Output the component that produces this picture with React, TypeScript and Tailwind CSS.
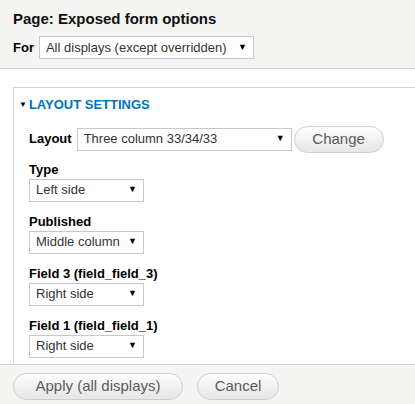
import React from 'react';

const FakeSelect: React.FC<{ value: string; width: string }> = ({ value, width }) => (
  <div
    className={`flex h-[23px] items-center justify-between border border-[#c8c8c8] bg-white pl-[6px] pr-[6px] text-[13px] text-[#333] ${width}`}
  >
    <span className="whitespace-nowrap">{value}</span>
    <span className="text-[9px] text-black">▼</span>
  </div>
);

const PillButton: React.FC<{ label: string; width: string }> = ({ label, width }) => (
  <button
    className={`flex h-[27px] items-center justify-center rounded-full border border-[#cfcfcf] bg-gradient-to-b from-[#fdfdfd] to-[#e6e6e6] text-[15px] text-[#5b5b5b] ${width}`}
  >
    {label}
  </button>
);

const fields = [
  { label: 'Type', value: 'Left side' },
  { label: 'Published', value: 'Middle column' },
  { label: 'Field 3 (field_field_3)', value: 'Right side' },
  { label: 'Field 1 (field_field_1)', value: 'Right side' },
];

export default function App() {
  return (
    <div
      className="h-[404px] w-[415px] overflow-hidden bg-white text-black"
      style={{ fontFamily: '"Liberation Sans", Arial, sans-serif' }}
    >
      <div className="h-[69px] border-b border-[#cdcdcd] bg-[#f4f4f2] px-[13px] pt-[9px]">
        <h1 className="text-[15px] font-bold leading-[20px] text-[#111]">Page: Exposed form options</h1>
        <div className="mt-[7px] flex items-center gap-[5px]">
          <span className="text-[13px] font-bold">For</span>
          <FakeSelect value="All displays (except overridden)" width="w-[215px]" />
        </div>
      </div>

      <div className="h-[295px] overflow-hidden pl-[13px] pt-[18px]">
        <div className="border-l border-t border-[#d4d4d4] pl-[5px] pt-[7px]">
          <div className="flex items-center gap-[2px] text-[13px] font-bold uppercase text-[#0074bd]">
            <span className="text-[8px] text-black">▼</span>
            <span>Layout settings</span>
          </div>

          <div className="mt-[11px] flex items-center pl-[10px]">
            <span className="mr-[5px] text-[13px] font-bold">Layout</span>
            <FakeSelect value="Three column 33/34/33" width="w-[215px]" />
            <div className="ml-[2px]">
              <PillButton label="Change" width="w-[90px]" />
            </div>
          </div>

          <div className="mt-[8px] flex flex-col gap-[11px] pl-[10px]">
            {fields.map((f) => (
              <div key={f.label} className="flex flex-col">
                <span className="h-[18px] text-[13px] font-bold leading-[18px]">{f.label}</span>
                <FakeSelect value={f.value} width="w-[115px]" />
              </div>
            ))}
          </div>
          <div className="h-[20px]" />
        </div>
      </div>

      <div className="h-[40px] border-t border-[#cdcdcd] bg-[#f4f4f2] px-[13px] pt-[8px]">
        <div className="flex gap-[14px]">
          <PillButton label="Apply (all displays)" width="w-[170px]" />
          <PillButton label="Cancel" width="w-[82px]" />
        </div>
      </div>
    </div>
  );
}
